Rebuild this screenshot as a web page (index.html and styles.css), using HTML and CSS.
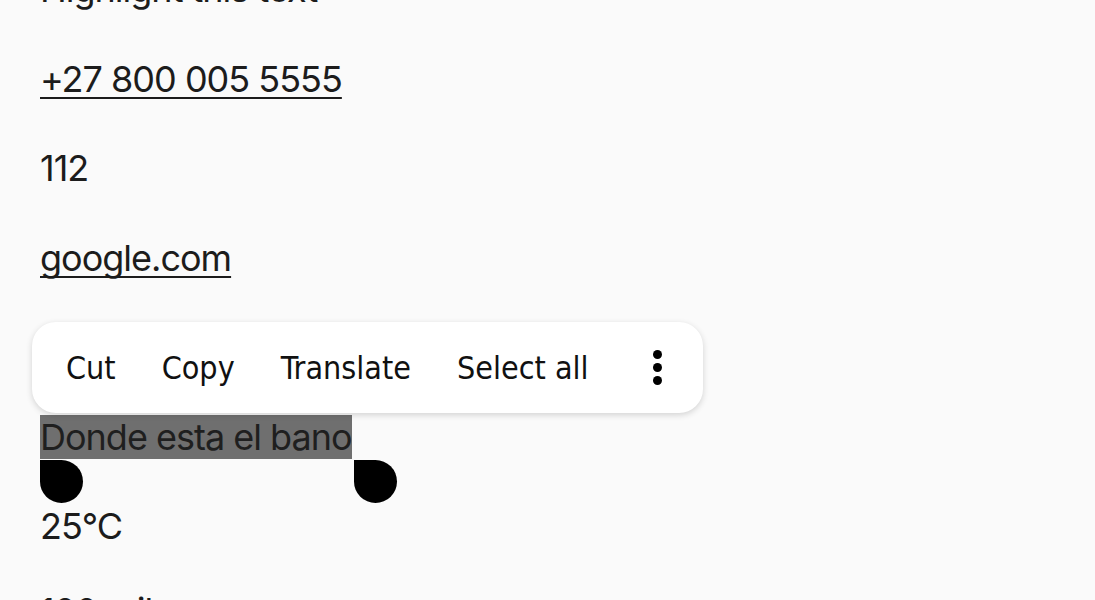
FILE: index.html
```html
<!DOCTYPE html>
<html>
<head>
<meta charset="utf-8">
<link rel="stylesheet" href="styles.css">
</head>
<body>
<main class="page">
  <p class="line">Highlight this text</p>
  <p class="line"><span class="link">+27 800 005 5555</span></p>
  <p class="line">112</p>
  <p class="line"><span class="link">google.com</span></p>
  <p class="line">&nbsp;</p>
  <p class="line sel-line"><span class="sel">Donde esta el bano</span><span class="handle handle-start"></span><span class="handle handle-end"></span></p>
  <p class="line line-tight">25°C</p>
  <p class="line">100 miles</p>
</main>
<div class="menu">
  <span class="item">Cut</span>
  <span class="item">Copy</span>
  <span class="item">Translate</span>
  <span class="item">Select all</span>
  <span class="more"><i></i><i></i><i></i></span>
</div>
</body>
</html>
```
FILE: styles.css
```css
html, body {
  margin: 0;
  padding: 0;
  background: #fafafa;
  overflow: hidden;
  height: 600px;
}
.page {
  padding-left: 40px;
  margin-top: -33px;
  font-family: Inter, Roboto, sans-serif;
  font-size: 36px;
  letter-spacing: -1px;
  color: #1c1c1c;
}
.line {
  margin: 0 0 45.5px 0;
  line-height: 44px;
  height: 44px;
  white-space: nowrap;
}
.line-tight {
  margin-bottom: 41px;
}
.link {
  text-decoration: underline;
  text-decoration-thickness: 2px;
  text-underline-offset: 5px;
  text-decoration-skip-ink: none;
}
.sel-line {
  position: relative;
}
.sel {
  background: #6f6f6f;
  color: #1f1f1f;
  display: inline-block;
  height: 44px;
}
.handle {
  position: absolute;
  top: 45px;
  width: 43px;
  height: 43px;
  background: #000;
  border-radius: 0 50% 50% 50%;
}
.handle-start { left: 0; }
.handle-end { left: 314px; }
.menu {
  position: absolute;
  left: 32px;
  top: 322px;
  width: 671px;
  height: 91px;
  box-sizing: border-box;
  background: #fff;
  border-radius: 24px;
  box-shadow: 0 2px 6px rgba(0,0,0,0.16);
  display: flex;
  align-items: center;
  padding-left: 34px;
  gap: 46px;
  font-family: "DejaVu Sans Condensed", "DejaVu Sans", sans-serif;
  font-stretch: condensed;
  font-size: 32px;
  color: #111;
}
.item {
  white-space: nowrap;
}
.more {
  display: flex;
  flex-direction: column;
  gap: 4px;
  margin-left: 18px;
}
.more i {
  display: block;
  width: 9px;
  height: 9px;
  border-radius: 50%;
  background: #000;
}
```
